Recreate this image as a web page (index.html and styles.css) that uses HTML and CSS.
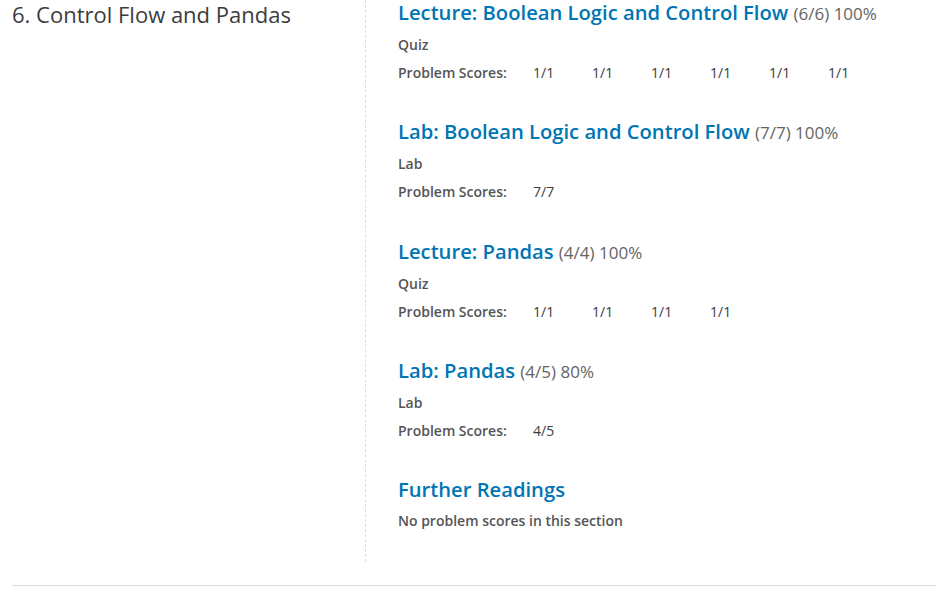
FILE: index.html
```html
<!DOCTYPE html>
<html lang="en">
<head>
<meta charset="utf-8">
<title>Progress</title>
<link rel="stylesheet" href="styles.css">
</head>
<body>
<div class="chapter">
  <h2 class="chapter-title">6. Control Flow and Pandas</h2>
  <div class="sections">
    <div class="section">
      <h3 class="section-title"><a href="#">Lecture: Boolean Logic and Control Flow</a> <span class="score">(6/6) 100%</span></h3>
      <p class="section-type">Quiz</p>
      <dl class="scores"><dt>Problem Scores:</dt><dd>1/1</dd><dd>1/1</dd><dd>1/1</dd><dd>1/1</dd><dd>1/1</dd><dd>1/1</dd></dl>
    </div>
    <div class="section">
      <h3 class="section-title"><a href="#">Lab: Boolean Logic and Control Flow</a> <span class="score">(7/7) 100%</span></h3>
      <p class="section-type">Lab</p>
      <dl class="scores"><dt>Problem Scores:</dt><dd>7/7</dd></dl>
    </div>
    <div class="section">
      <h3 class="section-title"><a href="#">Lecture: Pandas</a> <span class="score">(4/4) 100%</span></h3>
      <p class="section-type">Quiz</p>
      <dl class="scores"><dt>Problem Scores:</dt><dd>1/1</dd><dd>1/1</dd><dd>1/1</dd><dd>1/1</dd></dl>
    </div>
    <div class="section">
      <h3 class="section-title"><a href="#">Lab: Pandas</a> <span class="score">(4/5) 80%</span></h3>
      <p class="section-type">Lab</p>
      <dl class="scores"><dt>Problem Scores:</dt><dd>4/5</dd></dl>
    </div>
    <div class="section last">
      <h3 class="section-title"><a href="#">Further Readings</a></h3>
      <p class="section-type">No problem scores in this section</p>
    </div>
  </div>
</div>
</body>
</html>
```

FILE: styles.css
```css
body {
  margin: 0;
  font-family: "Open Sans", "Noto Sans", sans-serif;
  background: #fff;
}

.chapter {
  display: flex;
  margin-left: 12px;
  padding-bottom: 23px;
  border-bottom: 1px solid #ddd;
}

.chapter-title {
  width: 353px;
  flex: none;
  margin: 0;
  font-size: 22px;
  font-weight: 400;
  line-height: 28px;
  color: #3c3c3c;
}

.sections {
  flex: 1;
  border-left: 1px dashed #ddd;
  padding-left: 32px;
  padding-bottom: 31px;
}

.section {
  margin-bottom: 36.25px;
}

.section.last {
  margin-bottom: 0;
}

.section-title {
  margin: 0;
  font-size: 20.2px;
  font-weight: 600;
  line-height: 25px;
}

.section-title a {
  color: #0075b4;
  text-decoration: none;
}

.score {
  font-size: 17px;
  font-weight: 400;
  color: #646464;
}

.section-type {
  margin: 9px 0 0;
  font-size: 14px;
  font-weight: 600;
  line-height: 20px;
  color: #555;
}

.scores {
  display: flex;
  margin: 8px 0 0;
  font-size: 14px;
  line-height: 20px;
  color: #555;
}

.scores dt {
  width: 135px;
  font-weight: 600;
}

.scores dd {
  width: 59px;
  margin: 0;
  font-size: 14px;
  color: #3c3c3c;
}
```
